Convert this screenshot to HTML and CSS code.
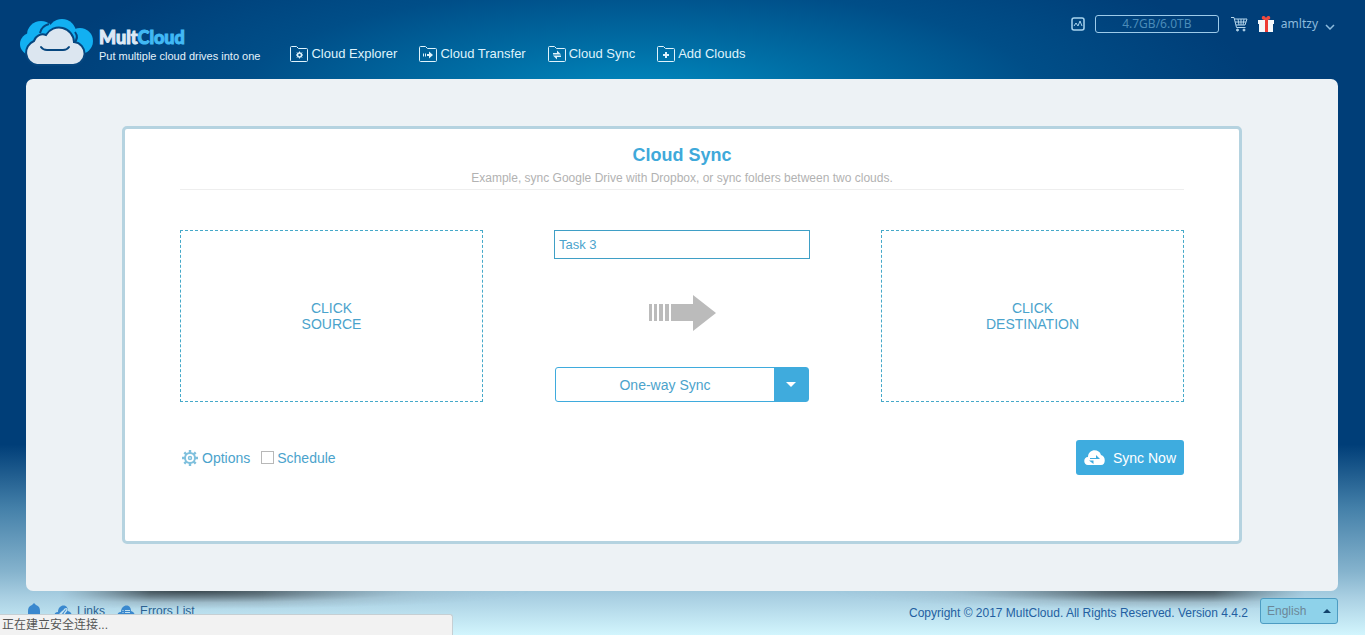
FILE: index.html
```html
<!DOCTYPE html>
<html lang="en">
<head>
<meta charset="utf-8">
<meta name="viewport" content="width=device-width, initial-scale=1">
<title>MultCloud - Cloud Sync</title>
<link rel="stylesheet" href="styles.css">
</head>
<body>
<div class="page">
  <header class="header">
    <a class="brand" href="#">
      <svg class="brand-logo" width="74" height="48" viewBox="0 0 74 48" aria-hidden="true">
        <g fill="#12b0f2">
          <circle cx="21" cy="17" r="14"/>
          <circle cx="42" cy="15" r="14"/>
          <circle cx="11" cy="26" r="11"/>
          <circle cx="60" cy="23" r="13"/>
        </g>
        <path d="M20 15c1-5 5-8 9-9M55 14c3 4 2 8-1 11" fill="none" stroke="#06467f" stroke-width="2"/>
        <path d="M17 47A12.500 12.500 0 0 1 14 23A9 9 0 0 1 26 17A15 15 0 0 1 54 24A11.500 11.500 0 0 1 52 47Z" fill="#dce6f0" stroke="#06467f" stroke-width="2"/>
        <path d="M21 29q2 3 6 3h16q4 0 6-3" fill="none" stroke="#06467f" stroke-width="2" stroke-linecap="round"/>
      </svg>
      <span class="brand-text">
        <span class="brand-name">Mult<span class="brand-accent">Cloud</span></span>
        <span class="tagline">Put multiple cloud drives into one</span>
      </span>
    </a>
    <nav class="nav">
      <a href="#">
        <svg width="18" height="16" viewBox="0 0 18 16" fill="none" stroke="currentColor" aria-hidden="true"><path d="M.5 1.500q0-1 1-1h5l2 2h8q1 0 1 1v11q0 1-1 1h-15q-1 0-1-1z"/><circle cx="9.500" cy="9" r="2" stroke-width="1.500"/><path d="M9.500 5.500v1.500M9.500 11v1.500M6 9h1.500M11.500 9h1.500M7 6.500l1 1M11 10.500l1 1M12 6.500l-1 1M8 10.500l-1 1"/></svg>
        Cloud Explorer</a>
      <a href="#">
        <svg width="18" height="16" viewBox="0 0 18 16" fill="none" stroke="currentColor" aria-hidden="true"><path d="M.5 1.500q0-1 1-1h5l2 2h8q1 0 1 1v11q0 1-1 1h-15q-1 0-1-1z"/><path d="M4.500 7.500v3M6.500 7.500v3"/><path d="M8 8h2v-2.500l4 3.500-4 3.500v-2.500h-2z" fill="currentColor" stroke="none"/></svg>
        Cloud Transfer</a>
      <a href="#">
        <svg width="18" height="16" viewBox="0 0 18 16" fill="none" stroke="currentColor" aria-hidden="true"><path d="M.5 1.500q0-1 1-1h5l2 2h8q1 0 1 1v11q0 1-1 1h-15q-1 0-1-1z"/><path d="M5 8.500V7h4V4.500l4 4zM13 9.500V11H9v2.500l-4-4z" fill="currentColor" stroke="none"/></svg>
        Cloud Sync</a>
      <a href="#">
        <svg width="18" height="16" viewBox="0 0 18 16" fill="none" stroke="currentColor" aria-hidden="true"><path d="M.5 1.500q0-1 1-1h5l2 2h8q1 0 1 1v11q0 1-1 1h-15q-1 0-1-1z"/><path d="M9 6v6M6 9h6" stroke-width="2"/></svg>
        Add Clouds</a>
    </nav>
    <div class="account">
      <button class="icon-button" type="button" aria-label="Traffic">
        <svg width="14" height="14" viewBox="0 0 14 14" fill="none" stroke="#a9d5ef" aria-hidden="true"><rect x="1" y="1" width="12" height="12" rx="2" stroke-width="1.500"/><path d="M3 9l2-3 2 3 2-5 2 5"/></svg>
      </button>
      <span class="quota">4.7GB/6.0TB</span>
      <a class="cart" href="#" aria-label="Cart">
        <svg width="17" height="16" viewBox="0 0 17 16" fill="none" stroke="#b4d5eb" aria-hidden="true"><path d="M0 1.500h3l2.500 10h9M3.500 3h12.500l-2 6h-9M4 6h11M7 3l1 6M10 3v6M13 3l-1 6"/><circle cx="6.500" cy="14" r="1" fill="#b4d5eb"/><circle cx="13" cy="14" r="1" fill="#b4d5eb"/></svg>
      </a>
      <a class="gift" href="#" aria-label="Gift">
        <svg width="16" height="16" viewBox="0 0 16 16" aria-hidden="true"><path d="M0 4h16v4H0zM1 8h14v8H1z" fill="#f3f7fb"/><path d="M7 3h3v13H7z" fill="#ee3b35"/><path d="M8 4C5 4 3 3 4 1s3-1 4 1c1-2 3-3 4-1s-1 3-4 3z" fill="#f04a3e"/></svg>
      </a>
      <button class="user" type="button">amltzy
        <svg width="10" height="6" viewBox="0 0 10 6" fill="none" stroke="currentColor" stroke-width="1.500" aria-hidden="true"><path d="M1 1l4 4 4-4"/></svg>
      </button>
    </div>
  </header>

  <main class="panel">
    <form class="card">
      <div class="card-head">
        <h1>Cloud Sync</h1>
        <p>Example, sync Google Drive with Dropbox, or sync folders between two clouds.</p>
      </div>
      <div class="sync">
        <button class="drop" type="button">CLICK<br>SOURCE</button>
        <div class="middle">
          <input class="task" type="text" value="Task 3" aria-label="Task name">
          <svg class="arrow" width="68" height="36" viewBox="0 0 68 36" fill="#bbb" aria-hidden="true"><path d="M1 9h3v17H1zM6 9h3v17H6zM11 9h4v17h-4zM17 9h4v17h-4zM23 9h22V0l23 18-23 18V26H23z"/></svg>
          <div class="mode">
            <select aria-label="Sync mode"><option>One-way Sync</option></select>
          </div>
        </div>
        <button class="drop" type="button">CLICK<br>DESTINATION</button>
      </div>
      <div class="actions">
        <button class="options" type="button">
          <svg width="16" height="16" viewBox="0 0 16 16" fill="none" stroke="#7fc0dd" aria-hidden="true"><circle cx="8" cy="8" r="5" stroke-width="2"/><circle cx="8" cy="8" r="1.500" stroke-width="1.500"/><path d="M8 0v3M8 13v3M0 8h3M13 8h3M2.300 2.300l2 2M11.700 11.700l2 2M13.700 2.300l-2 2M4.300 11.700l-2 2" stroke-width="2.400"/></svg>
          Options</button>
        <label class="schedule"><input type="checkbox">Schedule</label>
        <button class="submit" type="button">
          <svg width="21" height="15" viewBox="0 0 21 15" aria-hidden="true"><path d="M4 15C-1 15-1 7 4 7 4-1 15-2 17 5c5 1 5 10 0 10z" fill="#fff"/><path d="M6 8h6V5l4 4H6zM15 10.500H9.500V14L5 10.500z" fill="#3eacdf"/></svg>
          Sync Now</button>
      </div>
    </form>
  </main>

  <footer class="footer">
    <div class="tools">
      <a href="#" aria-label="Notifications">
        <svg width="16" height="17" viewBox="0 0 16 17" fill="#3a88ce" aria-hidden="true"><path d="M8 0l2 2c3 1 4 3 4 6v3l2 2H0l2-2V8c0-3 1-5 4-6zM6 14h4q0 3-2 3t-2-3z"/></svg>
      </a>
      <a href="#">
        <svg width="18" height="14" viewBox="0 0 18 14" aria-hidden="true"><path d="M4 14c-5 0-5-7 0-7 0-8 10-9 10-1 5 1 5 8 0 8z" fill="#3a88ce"/><path d="M7 9l4-5q2-1 2 1l-3 4M9 6l-3 3q-1 2 1 2l2-1" fill="none" stroke="#c4e3f2" stroke-width="1.300"/></svg>
        Links</a>
      <a href="#">
        <svg width="18" height="14" viewBox="0 0 18 14" aria-hidden="true"><path d="M4 14c-5 0-5-7 0-7 0-8 10-9 10-1 5 1 5 8 0 8z" fill="#3a88ce"/><path d="M5.500 5.500h1M8 5.500h5M5.500 7.500h1M8 7.500h5M5.500 9.500h1M8 9.500h5" stroke="#c4e3f2"/></svg>
        Errors List</a>
    </div>
    <div class="legal">
      <span>Copyright © 2017 MultCloud. All Rights Reserved. Version 4.4.2</span>
      <div class="language">
        <select aria-label="Language"><option>English</option></select>
      </div>
    </div>
  </footer>
</div>
<div class="status" lang="zh">正在建立安全连接...</div>
</body>
</html>
```
FILE: styles.css
```css
* {
  box-sizing: border-box;
}

body {
  margin: 0;
  font: 12px/16px "Liberation Sans", Arial, sans-serif;
}

button,
input,
select {
  font: inherit;
  margin: 0;
}

button {
  padding: 0;
  border: 0;
  background: none;
  cursor: pointer;
}

a {
  color: inherit;
  text-decoration: none;
}

svg {
  display: block;
  flex: none;
}

.page {
  isolation: isolate;
  display: flex;
  flex-direction: column;
  min-height: 100vh;
  background:
    radial-gradient(ellipse 620px 170px at 47% 98px, #008cc2 0%, #007bb1cc 30%, #005e9880 65%, #003e7800 100%) no-repeat,
    linear-gradient(#003e78 0, #003e78 70%, #4480a9 80%, #85b3cd 90%, #a9cfe2 94%, #d2f5fd 100%);
}

.header {
  display: flex;
  align-items: flex-start;
  height: 79px;
  padding: 0 30px 0 20px;
}

.brand {
  display: flex;
  gap: 5px;
  padding-top: 18px;
}

.brand-text {
  display: flex;
  flex-direction: column;
  padding-top: 9px;
}

.brand-name {
  color: #dce9f5;
  font: 900 18px/21px Lato, sans-serif;
  -webkit-text-stroke: 1px currentColor;
}

.brand-accent {
  color: #41b9f4;
}

.tagline {
  color: #e4f2fb;
  font-size: 11px;
  white-space: nowrap;
}

.nav {
  display: flex;
  gap: 22px;
  margin-left: 30px;
  padding-top: 45px;
  color: #dff3fc;
  font-size: 13px;
  line-height: 17px;
  white-space: nowrap;
}

.nav a {
  display: flex;
  align-items: center;
  gap: 3px;
}

.account {
  display: flex;
  align-items: center;
  margin-left: auto;
  padding-top: 15px;
  color: #8dbbdd;
  font: 12px/18px "Noto Sans", sans-serif;
}

.quota {
  width: 124px;
  height: 18px;
  margin: 0 12px 0 10px;
  border: 1px solid #9dcbea;
  border-radius: 3px;
  color: #4b8cb9;
  line-height: 16px;
  text-align: center;
}

.gift {
  margin: 0 7px 0 10px;
}

.user {
  display: flex;
  align-items: center;
  gap: 7px;
  color: inherit;
}

.user svg {
  margin-top: 6px;
}

.panel {
  position: relative;
  display: flex;
  flex: 1;
  margin: 0 27px 0 26px;
  padding: 47px 96px;
  border-radius: 7px;
  background: #edf2f5;
}

.panel::before,
.panel::after {
  content: "";
  position: absolute;
  z-index: -1;
  top: 100%;
  left: 34px;
  width: 480px;
  height: 18px;
  background: radial-gradient(ellipse 350px 18px at 130px 0, #3a484f, #5d6e77cc 35%, #8fa5b080 65%, transparent);
  mask-image: linear-gradient(to right, transparent, #000 90px, #000 200px, transparent);
}

.panel::after {
  right: 34px;
  left: auto;
  transform: scaleX(-1);
}

.card {
  flex: 1;
  padding: 15px 55px;
  border: 3px solid #b5d3e0;
  border-radius: 5px;
  background: #fff;
  color: #4ba3cc;
}

.card-head {
  border-bottom: 1px solid #eee;
  text-align: center;
}

.card-head h1 {
  margin: 0;
  color: #3fa9da;
  font-size: 18px;
  line-height: 22px;
}

.card-head p {
  margin: 0;
  padding: 4px 0 3px;
  color: #b2b2b2;
}

.sync {
  display: flex;
  justify-content: space-between;
  height: 172px;
  margin-top: 40px;
}

.drop {
  width: 303px;
  border: 1px dashed #45a9c9;
  color: inherit;
  font-size: 14px;
  line-height: 16px;
}

.middle {
  display: flex;
  flex-direction: column;
  align-items: center;
  width: 256px;
}

.task {
  width: 100%;
  height: 30px;
  padding: 0 4px;
  border: 1px solid #3f9fc6;
  background: #fff;
  color: inherit;
  font-size: 13px;
}

.arrow {
  margin: 36px 0;
}

.mode {
  position: relative;
  width: 254px;
}

.mode select {
  display: block;
  width: 100%;
  height: 35px;
  padding: 0 34px 0 0;
  border: 1px solid #3fabdd;
  border-radius: 3px;
  appearance: none;
  background: linear-gradient(#3fabdd, #3fabdd) right / 34px 100% no-repeat #fff;
  color: inherit;
  font-size: 14px;
  line-height: 16px;
  text-align-last: center;
}

.mode::after,
.language::after {
  content: "";
  position: absolute;
  top: 15px;
  right: 13px;
  border: 5px solid transparent;
  border-top-color: #fff;
  border-bottom: 0;
  pointer-events: none;
}

.actions {
  display: flex;
  align-items: center;
  margin-top: 38px;
  font-size: 14px;
}

.options {
  display: flex;
  align-items: center;
  gap: 4px;
  margin: 0 11px 0 2px;
  color: inherit;
}

.schedule {
  display: flex;
  align-items: center;
  gap: 3px;
}

.schedule input {
  width: 13px;
  height: 13px;
  border: 1px solid #b8b8b8;
  appearance: none;
  background: #fff;
}

.submit {
  display: flex;
  align-items: center;
  gap: 8px;
  height: 35px;
  margin-left: auto;
  padding: 0 8px;
  border-radius: 3px;
  background: #3eacdf;
  color: #fff;
}

.footer {
  display: flex;
  align-items: flex-start;
  justify-content: space-between;
  height: 44px;
  padding: 0 27px 0 26px;
}

.tools {
  display: flex;
  gap: 12px;
  padding-top: 12px;
  color: #2b6191;
}

.tools a {
  display: flex;
  gap: 5px;
}

.tools a + a svg {
  margin-top: 2px;
}

.legal {
  display: flex;
  gap: 12px;
  padding-top: 7px;
  color: #235fa1;
  line-height: 30px;
}

.language {
  position: relative;
}

.language select {
  display: block;
  width: 78px;
  height: 26px;
  padding: 0 6px;
  border: 1px solid #4d9cc2;
  border-radius: 3px;
  appearance: none;
  background: #8ed2ea;
  color: #6c8797;
  line-height: 16px;
}

.language::after {
  top: 11px;
  right: 7px;
  border: 4px solid transparent;
  border-top: 0;
  border-bottom-color: #12436b;
}

.status {
  position: fixed;
  bottom: 0;
  left: 0;
  width: 453px;
  height: 21px;
  padding-left: 2px;
  border: 1px solid #c6cfd3;
  border-width: 1px 1px 0 0;
  border-radius: 0 3px 0 0;
  background: #f2f2f2;
  color: #555;
  font: 12px/20px "Liberation Sans", "Noto Sans CJK SC", sans-serif;
}
```
